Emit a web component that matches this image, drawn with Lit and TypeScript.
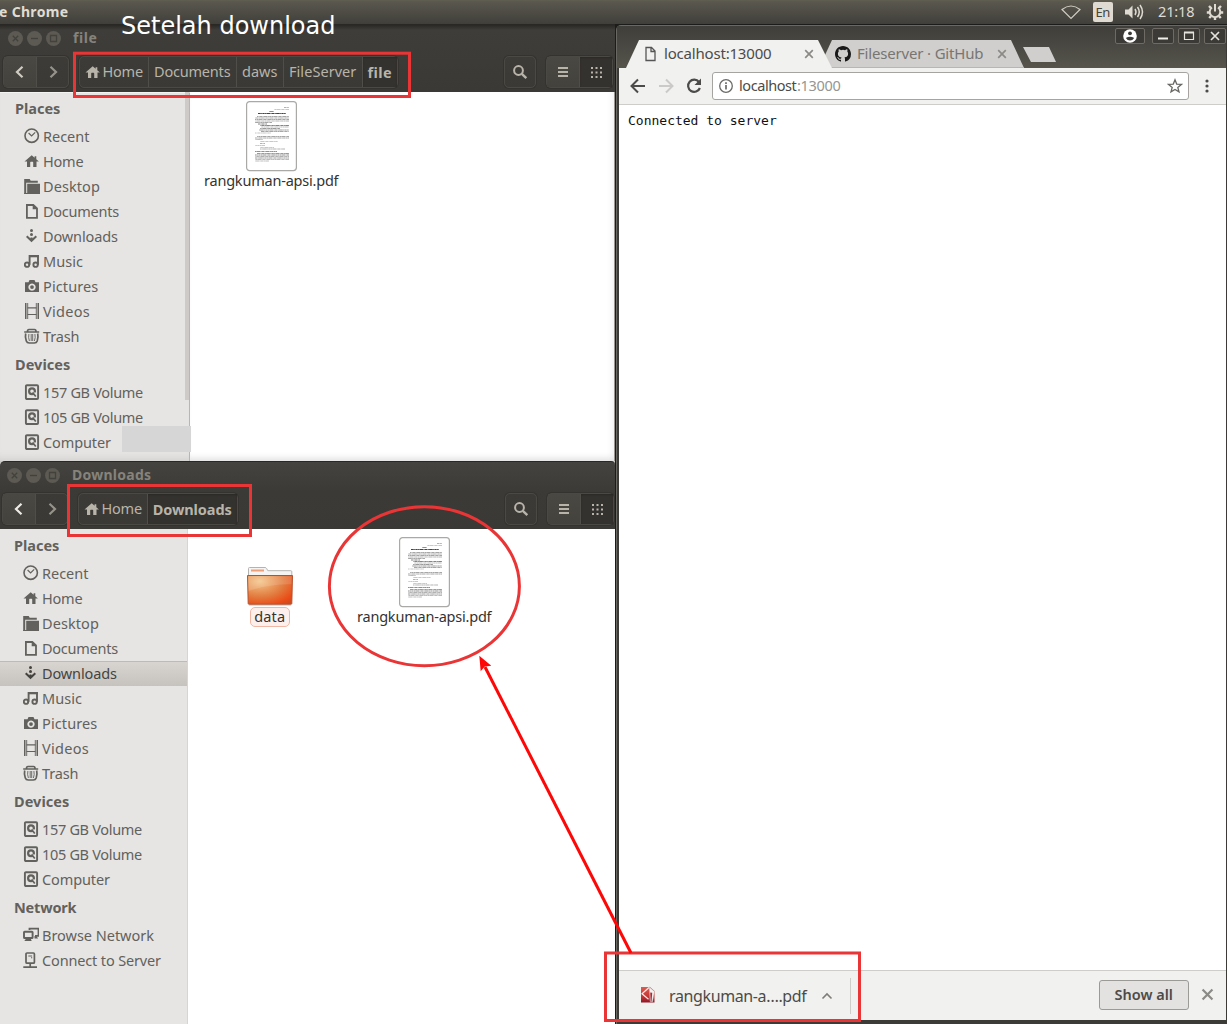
import { LitElement, html, css, svg, nothing } from "lit";
import { customElement, property } from "lit/decorators.js";
import { classMap } from "lit/directives/class-map.js";

/* Text that spreads its letters to occupy a given width. */
@customElement("fit-text")
class FitText extends LitElement {
  @property() text = "";
  @property({ type: Number }) w = 0;
  static styles = css`
    :host { display: block; flex: none; white-space: pre; padding-bottom: 2px; }
    .box { display: block; overflow: visible; }
    .ink { display: inline-block; }
  `;
  updated() {
    const ink = this.renderRoot.querySelector(".ink") as HTMLElement;
    ink.style.letterSpacing = "0px";
    const natural = ink.getBoundingClientRect().width;
    ink.style.letterSpacing = (this.w - 0.6 - natural) / this.text.length + "px";
  }
  render() {
    return html`<span class="box" style="width:${this.w}px"><span class="ink">${this.text}</span></span>`;
  }
}

const glyphs: Record<string, unknown> = {
  recent: svg`<circle cx="7.700" cy="7.700" r="6.700" fill="none" stroke="currentColor" stroke-width="1.600"/><path d="M4.600 5l3 3 3.600-3.600" fill="none" stroke="currentColor" stroke-width="1.200"/>`,
  home: svg`<path d="M7.700 2.200L.5 8.600H3V14h3.200V9.400q0-.6.6-.6h1.800q.6 0 .6.6V14h3.300V8.600h2.400L12.300 6.200V3.200h-1.700v1.500z" fill="currentColor"/>`,
  desktop: svg`<path d="M.2 16V.9h5.500l1 1.800h7.100v2H2.200V16z" fill="currentColor"/><path d="M3.200 5.700H16V16H.2v-1h3z" fill="currentColor"/>`,
  documents: svg`<path d="M2.900 2h6.400L13 5.400v9.400H2.900z" fill="none" stroke="currentColor" stroke-width="1.800"/><path d="M8.700 1.500v4.800h4.800z" fill="currentColor"/>`,
  downloads: svg`<circle cx="7.500" cy="2.400" r="1.500" fill="currentColor"/><circle cx="7.500" cy="6.500" r="1.500" fill="currentColor"/><path d="M7.500 9.500v3M2.700 8.300l4.800 4.500 4.800-4.500" fill="none" stroke="currentColor" stroke-width="2"/>`,
  music: svg`<g fill="none" stroke="currentColor" stroke-width="1.900"><circle cx="3" cy="11.700" r="2.200"/><circle cx="11.600" cy="11.700" r="2.200"/><path d="M5.600 11.700V3h8.400v8.700"/></g><path d="M5 2h9.900v2.300H5z" fill="currentColor"/>`,
  pictures: svg`<path fill-rule="evenodd" d="M1 4.200h3.500l1-2.200h5l1 2.200H15v9.800H1zM8 5.500a3.600 3.600 0 1 0 .01 0z" fill="currentColor"/><circle cx="8" cy="9.100" r="1.900" fill="currentColor"/>`,
  videos: svg`<path d="M3.500 4.800h9M3.500 11.500h9" fill="none" stroke="currentColor" stroke-width="1.200"/><path d="M1.500 0v16M14.500 0v16" stroke="currentColor" stroke-width="1" /><path d="M2.500 .5v15M13.500 .5v15" stroke="currentColor" stroke-width="1.200" stroke-dasharray="1 1"/><path d="M3.700 0v16M12.300 0v16" stroke="currentColor" stroke-width=".9"/>`,
  trash: svg`<path d="M.2 4h15M3.500 3.500q0-2 1.500-2h5.500q1.500 0 1.500 2" fill="none" stroke="currentColor" stroke-width="1.700"/><path d="M1.700 5.500q-.8 3.500.6 7.500.7 2 3 2h5q2.200 0 2.900-2 1.300-4 .5-7.500" fill="none" stroke="currentColor" stroke-width="1.700"/><path d="M4.900 6q-.8 3.500.5 7M7.200 6v7M8.700 6v7M10.900 6q.8 3.500-.5 7" fill="none" stroke="currentColor" stroke-width=".9"/>`,
  drive: svg`<rect x="1.900" y="1.200" width="12.200" height="13.800" rx="1" fill="none" stroke="currentColor" stroke-width="1.900"/><circle cx="8" cy="7.200" r="2.900" fill="none" stroke="currentColor" stroke-width="2.200"/><path d="M8.500 8.500h4v4z" fill="#e6e5e3"/><path d="M8.600 8.400l3.200 4.200" stroke="currentColor" stroke-width="1.700"/>`,
  network: svg`<path d="M6.500 3V1.700h9v7.100H12" fill="none" stroke="currentColor" stroke-width="1.800"/><rect x="1" y="4.700" width="8.600" height="6.300" rx=".6" fill="none" stroke="currentColor" stroke-width="1.900"/><path d="M3.500 11h4l1.200 3H1.300zM11.500 9h2l1.500 2.500h-3.500z" fill="currentColor"/>`,
  server: svg`<rect x="3" y="1" width="8.400" height="10.200" rx="1" fill="none" stroke="currentColor" stroke-width="1.700"/><path d="M7.200 11v3.500M.3 15.200h13.700" stroke="currentColor" stroke-width="1.700"/><path d="M5.300 4h3.800" stroke="currentColor" stroke-width="1"/><path d="M8 5.300h1.200v1H8z" fill="currentColor"/>`,
};
const icon = (name: string) => html`<svg class="ico" width="16" height="16" viewBox="0 0 16 16">${glyphs[name]}</svg>`;

type Place = [string, string, number];
const places: Place[] = [
  ["recent", "Recent", 47], ["home", "Home", 41], ["desktop", "Desktop", 57.5], ["documents", "Documents", 76.5],
  ["downloads", "Downloads", 75.5], ["music", "Music", 40.5], ["pictures", "Pictures", 56], ["videos", "Videos", 47.5], ["trash", "Trash", 37],
];
const devices: Place[] = [["drive", "157 GB Volume", 100.5], ["drive", "105 GB Volume", 100.5], ["drive", "Computer", 68.5]];
const network: Place[] = [["network", "Browse Network", 112.5], ["server", "Connect to Server", 119.5]];

/* Printed lines of the page preview: y, x, width, darkness. */
const ink: number[][] = [
  [6.5, 38, 5, 0.35], [8.5, 28, 15, 0.25], [10.5, 23, 5, 0.5], [12.5, 12, 28, 0.85],
  [15.5, 11, 32, 0.4], [17, 9, 34, 0.4], [18.5, 9, 34, 0.4], [20, 9, 34, 0.35], [21.5, 9, 17, 0.4], [23, 12, 9, 0.55],
  [24.5, 14, 29, 0.55], [26, 15, 28, 0.3], [27.5, 14, 20, 0.45], [29, 13, 30, 0.45], [30.500, 15, 28, 0.4], [32, 9, 16, 0.25],
  [35.500, 11, 32, 0.4], [37, 9, 34, 0.4], [38.500, 9, 8, 0.3], [40.500, 14, 18, 0.25], [42.500, 14, 5, 0.35], [44.500, 9, 10, 0.25],
  [46.500, 14, 14, 0.25], [48, 14, 25, 0.35], [50.500, 9, 22, 0.5], [52.500, 11, 32, 0.45], [54, 9, 34, 0.5], [55.500, 9, 34, 0.35],
  [57, 9, 34, 0.45], [58.500, 9, 34, 0.3], [60, 9, 14, 0.3],
];

@customElement("file-window")
class FileWindow extends LitElement {
  @property() heading = "";
  @property() kind = "file";
  static styles = css`
    :host { display: flex; flex-direction: column; font: 14.5px/20px "Noto Sans", "Open Sans", sans-serif; color: #62615d; overflow: hidden; }
    .head { height: 68px; flex: none; box-sizing: border-box; background: linear-gradient(#44433f, #3c3a36 45%, #3b3935); border-top: 1px solid #292824; border-radius: 5px 4px 0 0; }
    .file .head { border-radius: 0; background: linear-gradient(#292825, #3e3d39 5px, #3b3935); }
    .title { height: 28px; margin: -1px 0 1px; display: flex; align-items: center; padding-left: 8px; gap: 4px; color: #86837b; font-weight: 700; font-size: 14px; }
    .down .title { padding-left: 7px; }
    .dot { width: 15px; height: 15px; border-radius: 50%; background: #5c5a53; }
    .dot svg { display: block; }
    .title fit-text { margin-left: 8px; padding: 0; }
    .bar { display: flex; align-items: center; height: 32px; padding: 3px 2px 0 3px; }
    .down .bar { padding-left: 2px; padding-right: 1px; }
    .grp { display: flex; height: 32px; box-sizing: border-box; border: 1px solid #4b4943; border-radius: 5px; box-shadow: 0 0 0 1px #35332f; }
    .cell { display: flex; align-items: center; justify-content: center; box-sizing: border-box; border-left: 1px solid #504e48; color: #b8b4aa; height: 30px; }
    .cell:first-child { border-left: 0; }
    .raise { background: linear-gradient(#4a4843, #44423d); }
    .press { background: #34322e; font-weight: 700; box-shadow: inset 0 1px 2px #2a2926; }
    .press fit-text { padding-bottom: 0; }
    .nav .cell { width: 32px; }
    .path { margin-left: 10px; }
    .path .ico { margin-right: 2px; }
    .space { flex: 1; }
    .view { margin-left: 10px; }
    .view .cell { width: 32px; }
    .view .press { width: 33px; }
    .find .cell { width: 30px; }
    .body { flex: 1; display: flex; min-height: 0; background: #fff; }
    .side { width: 190px; flex: none; box-sizing: border-box; background: #e6e5e3; border-right: 1px solid #b9b6b2; display: flex; padding-top: 5px; }
    .down .side { width: 188px; border-color: #d7d5d2; }
    .list { flex: 1; }
    .track { width: 4px; height: 308px; background: #cdcac7; margin: -5px 0 0; }
    .file .side { border-top: 1px solid #f3f3f2; padding-top: 4px; box-shadow: inset 0 -10px 10px -8px #cfcecc; }
    .cap { height: 24px; line-height: 22px; padding-left: 15px; font-weight: 700; margin-bottom: 3px; }
    .cap.next { margin-top: 4px; }
    .row { display: flex; height: 25px; align-items: center; padding-left: 24px; gap: 3px; box-sizing: border-box; }
    .down .row { padding-left: 23px; }
    .down .cap { padding-left: 14px; }
    .row.on { color: #45433f; background: linear-gradient(#d9d6d2, #c6c3be); box-shadow: inset 0 1px #bebbb7; }
    .row .ico { margin-top: -1px; }
    .ico { display: block; flex: none; }
    .files { flex: 1; display: flex; align-items: flex-start; }
    .file .files { padding: 9px 0 0 14px; box-shadow: inset 0 -7px 6px -4px #e2e2e2, inset -12px 0 8px -11px #f0f0f0; border-right: 1px solid #9b9893; }
    .down .files { padding: 8px 0 0 59px; gap: 64px; }
    .item { display: flex; flex-direction: column; align-items: center; color: #34332f; }
    .item svg { display: block; }
    .pdf fit-text { margin-top: -2px; }
    .folder { padding-top: 29px; }
    .lab { box-sizing: border-box; height: 20px; border: 1px solid #f2b7a4; background: #fdf0ec; border-radius: 5px; padding: 0 3px; line-height: 17px; }
  `;
  row([ic, label, w]: Place) {
    const on = this.kind === "down" && label === "Downloads";
    return html`<div class=${classMap({ row: true, on })}>${icon(ic)}<fit-text .text=${label} .w=${w}></fit-text></div>`;
  }
  pdf() {
    return html`<div class="item pdf">
      <svg width="51" height="71" viewBox="0 0 51 71"><rect x=".6" y=".6" width="49.800" height="69" rx="3" fill="#fff" stroke="#aaa9a6" stroke-width="1.200"/>
        ${ink.map(([y, x, w, o], i) => svg`<path d=${`M${x} ${y}h${w}`} stroke="#222" stroke-opacity=${o} stroke-width="1.100" stroke-dasharray="2.300 .4 1.200 .3 3.700 .4 .9 .3" stroke-dashoffset=${i * 1.7}/>`)}
      </svg><fit-text .text=${"rangkuman-apsi.pdf"} .w=${135}></fit-text></div>`;
  }
  render() {
    const down = this.kind === "down";
    const crumbs: [string, number, number][] = down ? [["Home", 41, 68], ["Downloads", 79.5, 90]]
      : [["Home", 41, 68], ["Documents", 77, 88], ["daws", 36, 47], ["FileServer", 68, 79], ["file", 25, 35]];
    const mark = "#42413b";
    return html`<div class=${this.kind} style="display:contents">
      <div class="head">
        <div class="title">
          ${["M4.800 4.800l5.400 5.400M10.200 4.800l-5.400 5.400", "M4 7.500h7", "M4.500 4.500h6v6h-6z"].map((d) => html`<div class="dot"><svg width="15" height="15"><path d=${d} fill="none" stroke=${mark} stroke-width="1.300"/></svg></div>`)}
          <fit-text .text=${this.heading} .w=${down ? 80 : 25}></fit-text>
        </div>
        <div class="bar">
          <div class="grp nav">
            <div class="cell raise"><svg width="14" height="14"><path d="M9.500 1.800L4 7l5.500 5.200" fill="none" stroke=${down ? "#eeece6" : "#cfccc3"} stroke-width="2.200"/></svg></div>
            <div class="cell"><svg width="14" height="14"><path d="M4.500 1.800L10 7l-5.500 5.200" fill="none" stroke="#96938a" stroke-width="2.200"/></svg></div>
          </div>
          <div class="grp path">
            ${crumbs.map(([t, w, cw], i) => html`<div class=${classMap({ cell: true, press: i === crumbs.length - 1 })} style="width:${cw}px">${i === 0 ? icon("home") : nothing}<fit-text .text=${t} .w=${w}></fit-text></div>`)}
          </div>
          <div class="space"></div>
          <div class="grp find"><div class="cell"><svg width="16" height="16"><circle cx="6.500" cy="6.500" r="4.400" fill="none" stroke="currentColor" stroke-width="2"/><path d="M9.800 9.800l4.500 4.300" stroke="currentColor" stroke-width="2.400"/></svg></div></div>
          <div class="grp view">
            <div class="cell raise"><svg width="12" height="12"><path d="M1 2h10M1 6h10M1 10h10" stroke="currentColor" stroke-width="2"/></svg></div>
            <div class="cell press"><svg width="12" height="12"><path d="M1 2h11M1 6.500h11M1 11h11" stroke="currentColor" stroke-width="2" stroke-dasharray="2 2.500"/></svg></div>
          </div>
        </div>
      </div>
      <div class="body">
        <div class="side">
          <div class="list">
            <div class="cap"><fit-text .text=${"Places"} .w=${46}></fit-text></div>${places.map((p) => this.row(p))}
            <div class="cap next"><fit-text .text=${"Devices"} .w=${56}></fit-text></div>${devices.map((p) => this.row(p))}
            ${down ? html`<div class="cap next"><fit-text .text=${"Network"} .w=${63}></fit-text></div>${network.map((p) => this.row(p))}` : nothing}
          </div>
          ${down ? nothing : html`<div class="track"></div>`}
        </div>
        <div class="files">
          ${down ? html`<div class="item folder">
            <svg width="46" height="41" viewBox="0 0 46 41">
              <defs><radialGradient id="f" cx=".27" cy=".2" r="1"><stop offset="0" stop-color="#f3c68a"/><stop offset=".55" stop-color="#e27a3e"/><stop offset=".85" stop-color="#ea4d17"/><stop offset="1" stop-color="#cf4a1c"/></radialGradient></defs>
              <path d="M1.500 10V2.500q0-1 1-1h15.500q1 0 1.600 1l1.200 2.200h23q1 0 1 1V10z" fill="#f5f4f2" stroke="#b5b3b0"/>
              <path d="M4 4.500h13" stroke="#eda077" stroke-width="2"/>
              <path d="M.5 9.500h45l-.7 28q0 .8-1 .8H2.200q-1 0-1-.8z" fill="url(#f)" stroke="#b5512c"/>
              <path d="M1.300 10.200h43.400l-.2 8Q22 18 1.600 25z" fill="#fff" opacity=".14"/>
              <path d="M2 39.300h42" stroke="#bbb" stroke-width="1" opacity=".6"/>
            </svg>
            <div class="lab"><fit-text .text=${"data"} .w=${31.5}></fit-text></div></div>` : nothing}
          ${this.pdf()}
        </div>
      </div></div>`;
  }
}

@customElement("web-browser")
class WebBrowser extends LitElement {
  static styles = css`
    :host { display: flex; flex-direction: column; box-sizing: border-box; border-left: 1px solid #696862; background: #3c3b37; color: #4c4b48; font: 15px/20px "Noto Sans", "Open Sans", sans-serif; border-top: 1px solid #696862; border-radius: 5px 0 0 0; padding: 0 1px 4px 2px; }
    svg { display: block; flex: none; }
    .strip { height: 42px; display: flex; background: linear-gradient(#3f3e3a, #56544b); margin-left: -2px; padding-left: 9px; }
    .tab { height: 28px; margin-top: 14px; box-sizing: border-box; display: flex; align-items: center; }
    .t1 { width: 206px; padding-left: 17px; background: #f1f1ef; clip-path: polygon(0 100%, 13px 0, 192px 0, 100% 100%); position: relative; z-index: 1; }
    .t2 { width: 205px; margin-left: -13px; padding-left: 16px; background: #d0cfcd; color: #777672; clip-path: polygon(0 100%, 13px 0, 192px 0, 100% 100%); box-shadow: inset 0 -1px #b7b6b2; }
    .t1 fit-text { margin-left: 7px; }
    .t2 fit-text { margin-left: 6px; }
    .t1 .x { margin-left: 32px; }
    .t2 .x { margin-left: 13px; }
    .new { width: 33px; height: 15px; margin: 21px 0 0 -1px; background: #d0cfcd; clip-path: polygon(0 0, 26px 0, 100% 100%, 8px 100%); }
    .ctl { display: flex; margin: 2px 0 0 auto; gap: 4px; height: 16px; }
    .btn { width: 22px; height: 16px; box-sizing: border-box; border: 1px solid #6d6b64; border-radius: 2px; display: flex; align-items: center; justify-content: center; background: #3b3a36; }
    .user { width: 30px; margin-right: 3px; }
    .tools { height: 37px; box-sizing: border-box; background: #f1f1ef; border-bottom: 1px solid #cecdca; display: flex; align-items: center; padding: 0 10px; }
    .addr { flex: 1; height: 28px; box-sizing: border-box; border: 1px solid #a5a4a1; border-radius: 3px; background: #fff; display: flex; align-items: center; margin: 0 9px; padding: 0 5px 0 5px; font-size: 14.500px; }
    .addr .i { margin-right: 5px; }
    .addr .port { color: #969591; flex: 1; }
    .page { flex: 1; background: #fff; padding: 8px 9px; color: #111; font: 13px/15px "DejaVu Sans Mono", monospace; }
    .shelf { height: 50px; box-sizing: border-box; background: #f1f1ef; border-top: 1px solid #cecdca; display: flex; align-items: center; padding-left: 21px; font-size: 16px; }
    .shelf .name { margin: 2px 14px 0 13px; }
    .rule { width: 1px; height: 36px; background: #cecdca; margin-left: 17px; }
    .all { margin: -2px 0 0 auto; width: 90px; height: 30px; box-sizing: border-box; border: 1px solid #9b9a97; border-radius: 3px; background: #e3e2e0; font-weight: 600; font-size: 14.500px; display: flex; align-items: center; justify-content: center; }
    .shelf .close { margin: -2px 12px 0 12px; }
  `;
  cross(cls: string, size: number) {
    return html`<svg class=${cls} width=${size} height=${size} viewBox="0 0 10 10"><path d="M1.200 1.200l7.600 7.600M8.800 1.200L1.200 8.800" stroke="#8b8a87" stroke-width="1.700"/></svg>`;
  }
  render() {
    return html`
      <div class="strip">
        <div class="tab t1">
          <svg width="14" height="16"><path d="M3 1.500h5.500L12 5v9.500H3zM8 1.500v4h4" fill="none" stroke="#555" stroke-width="1.300"/></svg>
          <fit-text .text=${"localhost:13000"} .w=${108}></fit-text>${this.cross("x", 10)}
        </div>
        <div class="tab t2">
          <svg width="16" height="16" viewBox="0 0 16 16"><path fill="#191919" d="M8 0C3.580 0 0 3.580 0 8c0 3.540 2.290 6.530 5.470 7.590.4.070.55-.17.55-.38v-1.490c-2.230.48-2.700-.95-2.700-.95-.36-.92-.89-1.170-.89-1.170-.73-.5.06-.49.06-.49.8.06 1.230.83 1.230.83.71 1.220 1.870.87 2.330.66.070-.52.28-.87.5-1.070-1.770-.2-3.640-.89-3.640-3.950 0-.87.31-1.590.82-2.150-.08-.2-.36-1.020.08-2.120 0 0 .67-.21 2.200.82a7.600 7.600 0 0 1 4 0c1.530-1.040 2.200-.82 2.200-.82.44 1.100.16 1.920.08 2.120.51.56.82 1.270.82 2.150 0 3.070-1.870 3.750-3.650 3.950.29.25.54.73.54 1.480v2.200c0 .21.15.46.55.38A8 8 0 0 0 16 8c0-4.420-3.580-8-8-8z"/></svg>
          <fit-text .text=${"Fileserver · GitHub"} .w=${127}></fit-text>${this.cross("x", 10)}
        </div>
        <div class="new"></div>
        <div class="ctl">
          <div class="btn user"><svg width="14" height="14"><circle cx="7" cy="7" r="6.800" fill="#fff"/><circle cx="7" cy="4.300" r="1.900" fill="#3b3a36"/><path d="M2.800 9q4.200-2.400 8.400 0-1.600 2.500-4.200 2.500T2.800 9z" fill="#3b3a36"/></svg></div>
          <div class="btn"><svg width="12" height="12"><path d="M1 8.500h10" stroke="#f0efeb" stroke-width="2"/></svg></div>
          <div class="btn"><svg width="12" height="12"><path d="M1.500 2.500h9v7h-9z" fill="none" stroke="#e4e2dc" stroke-width="1.200"/><path d="M1 2.500h10" stroke="#e4e2dc" stroke-width="2"/></svg></div>
          <div class="btn"><svg width="12" height="12"><path d="M2 2l8 8M10 2l-8 8" stroke="#e4e2dc" stroke-width="1.700"/></svg></div>
        </div>
      </div>
      <div class="tools">
        <svg width="18" height="18"><path d="M16 9H3M9 2.500L2.500 9 9 15.500" fill="none" stroke="#4c4b49" stroke-width="2"/></svg>
        <svg width="18" height="18" style="margin-left:10px"><path d="M2 9h13M9 2.500L15.500 9 9 15.500" fill="none" stroke="#cbcac8" stroke-width="2"/></svg>
        <svg width="18" height="18" style="margin-left:10px"><path d="M14 5A6.100 6.100 0 1 0 14.900 11" fill="none" stroke="#4c4b49" stroke-width="2.200"/><path d="M16 1.500v6.500H9.500z" fill="#4c4b49"/></svg>
        <div class="addr">
          <svg class="i" width="16" height="16"><circle cx="8" cy="8" r="6.300" fill="none" stroke="#6b6a67" stroke-width="1.300"/><path d="M8 7v4.500M8 4.300v1.700" stroke="#6b6a67" stroke-width="1.700"/></svg>
          <fit-text .text=${"localhost"} .w=${58}></fit-text><fit-text class="port" .text=${":13000"} .w=${44}></fit-text>
          <svg width="16" height="16"><path d="M8 1.800l1.700 4.300 4.700.3-3.600 3 1.200 4.500L8 11.400l-4 2.500 1.200-4.500-3.600-3 4.700-.3z" fill="none" stroke="#686764" stroke-width="1.300"/></svg>
        </div>
        <svg width="18" height="18"><g fill="#4c4b49"><circle cx="9" cy="4" r="1.600"/><circle cx="9" cy="9" r="1.600"/><circle cx="9" cy="14" r="1.600"/></g></svg>
      </div>
      <div class="page">Connected to server</div>
      <div class="shelf">
        <svg width="16" height="17" viewBox="0 0 16 17" style="margin-top:-2px">
          <defs><linearGradient id="p" x2="0" y2="1"><stop stop-color="#dc5b50"/><stop offset=".6" stop-color="#c53735"/><stop offset="1" stop-color="#8f1728"/></linearGradient></defs>
          <path d="M1 1h9L14.500 5v11.500H1z" fill="url(#p)"/>
          <path d="M9 1.500L2 7.800l6.500 5.400" fill="none" stroke="#fbeeee" stroke-width="1.200"/><path d="M9 .8L14.500 5.500 12.500 16 10 15.500 9.600 7z" fill="#f4f1f1" stroke="#b9a9a9" stroke-width=".4"/><path d="M10.200 6.500l2 .3-.6 8.700h-1z" fill="#a82a32"/>
        </svg>
        <fit-text class="name" .text=${"rangkuman-a….pdf"} .w=${138}></fit-text>
        <svg width="12" height="12"><path d="M1.500 8.500L6 4l4.500 4.500" fill="none" stroke="#7e7d7a" stroke-width="1.600"/></svg>
        <div class="rule"></div>
        <div class="all"><fit-text .text=${"Show all"} .w=${59}></fit-text></div>${this.cross("close", 13)}
      </div>`;
  }
}

@customElement("app-root")
class AppRoot extends LitElement {
  static styles = css`
    :host { display: flex; flex-direction: column; position: relative; width: 1227px; height: 1024px; overflow: hidden; background: #3c3b37; }
    .panel { height: 24px; flex: none; display: flex; align-items: center; background: linear-gradient(#625f50 0, #59574e 2px, #403f3a); color: #e0dcd2; font: 14.500px/20px "Noto Sans", "Open Sans", sans-serif; padding-right: 3px; }
    .app { font-weight: 700; font-size: 14px; margin-left: -1px; padding: 0; }
    .tray { margin-left: auto; display: flex; align-items: center; }
    .lang { width: 20px; height: 20px; background: #dfdbd2; color: #45443f; border-radius: 2px; font-size: 13px; margin: 0 11px 0 12px; display: flex; align-items: center; justify-content: center; }
    .lang fit-text { padding: 0; }
    .desk { flex: 1; display: flex; min-height: 0; background: #1c1c1a; }
    .left { width: 615px; flex: none; display: flex; flex-direction: column; background: #c9c8c6; }
    .first { height: 437px; }
    .second { flex: 1; }
    web-browser { flex: 1; margin-left: 1px; margin-top: 1px; }
    .patch { position: absolute; left: 122px; top: 426px; width: 69px; height: 26px; background: #d6d6d6; }
    .marks { position: absolute; inset: 0; }
    .note { position: absolute; left: 121px; top: 12px; font: 24px/28px "DejaVu Sans", sans-serif; color: #fff; white-space: nowrap; }
    svg { display: block; }
  `;
  render() {
    return html`
      <div class="panel">
        <fit-text class="app" .text=${"e Chrome"} .w=${70}></fit-text>
        <div class="tray">
          <svg width="20" height="16"><path d="M1 5.500Q10-1.500 19 5.500L10 14.500z" fill="none" stroke="#d0ccc2" stroke-width="1.200"/></svg>
          <div class="lang"><fit-text .text=${"En"} .w=${15}></fit-text></div>
          <svg width="22" height="18"><path d="M1 6.500h3.500l4-4v13l-4-4H1z" fill="#dfdbd2"/><path d="M11 6q2 3 0 6M13.500 4q3.500 5 0 10M16 2q5 7 0 14" fill="none" stroke="#dfdbd2" stroke-width="1.500"/></svg>
          <fit-text .text=${"21:18"} .w=${37} style="margin:0 11px 0 12px"></fit-text>
          <svg width="18" height="18"><g fill="none" stroke="#dfdbd2"><path d="M6 4.500a5.300 5.300 0 1 0 6 0" stroke-width="2"/><path d="M9 1v7.500" stroke-width="2"/><path d="M4.800 4.800L3 3M13.200 4.800L15 3M3.500 9.500H.8M14.500 9.500h2.700M5 13.200L3.200 15M13 13.200l1.800 1.800M9 14.500V17" stroke-width="2.400"/></g></svg>
        </div>
      </div>
      <div class="desk">
        <div class="left">
          <file-window class="first" heading="file" kind="file"></file-window>
          <file-window class="second" heading="Downloads" kind="down"></file-window>
        </div>
        <web-browser></web-browser>
      </div>
      <div class="patch"></div>
      <svg class="marks" width="1227" height="1024">
        <g fill="none" stroke="#e93535" stroke-width="3">
          <rect x="74.500" y="53.200" width="335" height="43.300"/>
          <rect x="68.500" y="485.500" width="182" height="50"/>
          <rect x="605.500" y="953" width="254" height="67.500"/>
          <ellipse cx="424.400" cy="586.200" rx="95" ry="79.500"/>
        </g>
        <path d="M631 953L485 667" stroke="#fd0707" stroke-width="3"/>
        <path d="M479.300 655.700L491.300 665.700 484.800 666.500 480.700 671.300z" fill="#fd0707"/>
      </svg>
      <div class="note">Setelah download</div>`;
  }
}
